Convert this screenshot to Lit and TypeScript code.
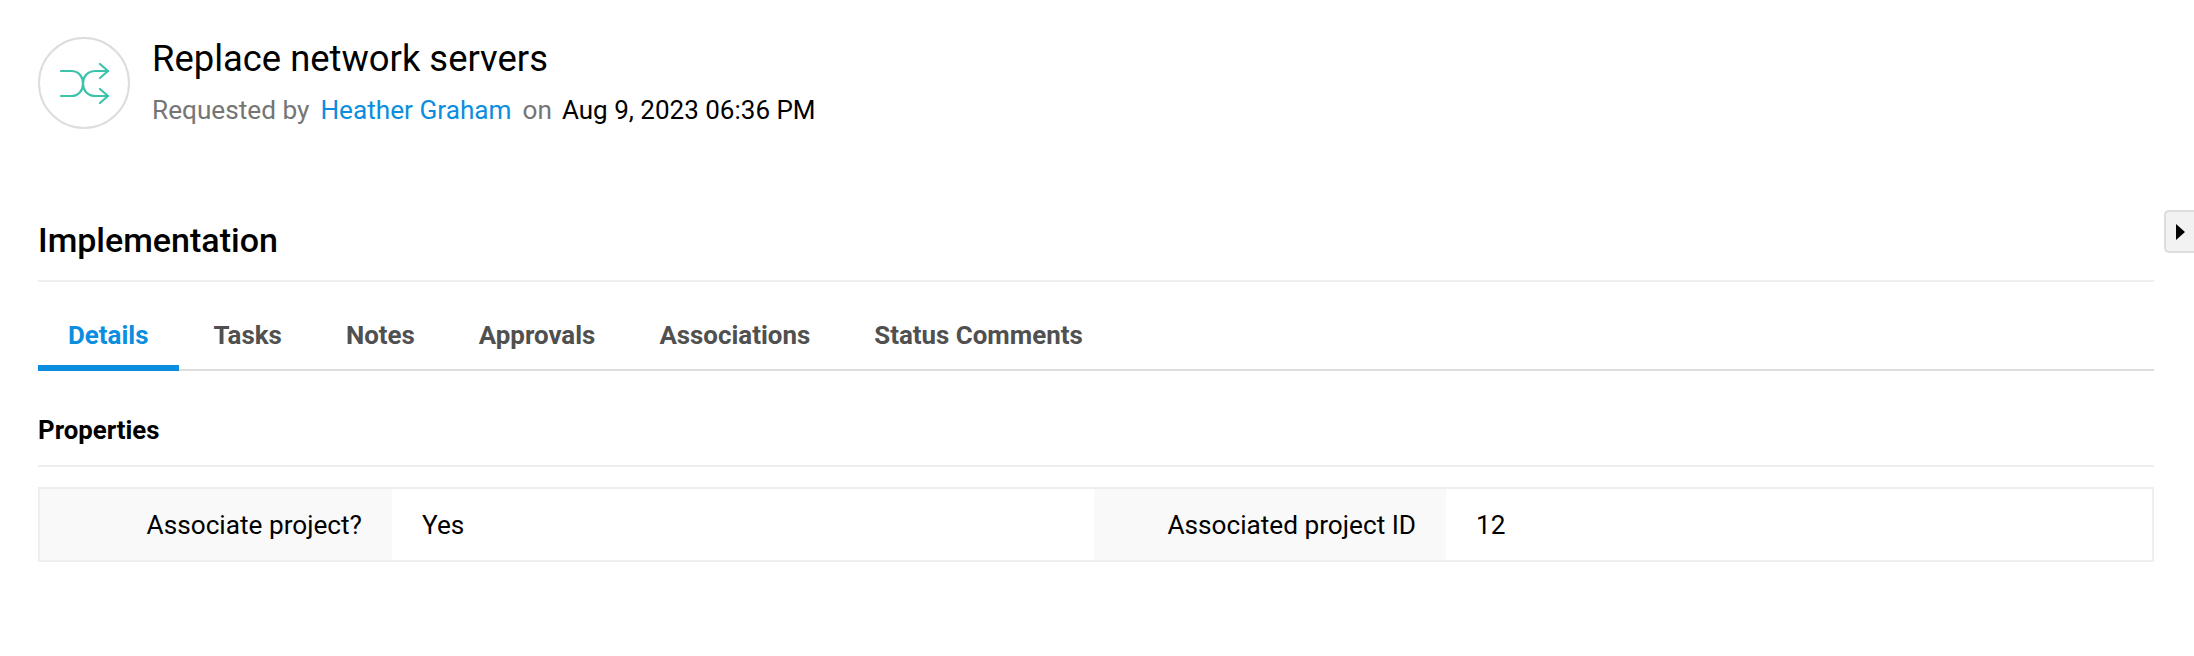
import { LitElement, html, css } from 'lit';
import { customElement } from 'lit/decorators.js';

const TABS = ['Details', 'Tasks', 'Notes', 'Approvals', 'Associations', 'Status Comments'];

@customElement('app-root')
export class AppRoot extends LitElement {
  static styles = css`
    :host {
      display: block;
      position: relative;
      height: 656px;
      padding: 37px 40px 0 38px;
      box-sizing: border-box;
      background: #fff;
      color: #000;
      font-family: Roboto, "Liberation Sans", sans-serif;
      font-size: 26.2px;
      overflow: hidden;
    }

    .header {
      display: flex;
      align-items: center;
      gap: 22px;
      height: 92px;
    }

    .avatar {
      width: 92px;
      height: 92px;
      flex: none;
      box-sizing: border-box;
      border: 2px solid #ddd;
      border-radius: 50%;
      display: flex;
      align-items: center;
      justify-content: center;
    }

    .title {
      font-size: 36.4px;
      line-height: 37px;
      font-weight: 400;
      margin: 0 0 16px;
    }

    .meta {
      display: flex;
      gap: 11px;
      line-height: 34px;
    }

    .date {
      font-size: 26px;
      margin-left: -1px;
    }

    .muted {
      color: #757575;
    }

    .link {
      color: #0b8ee0;
    }

    .section-title {
      font-size: 34px;
      font-weight: 500;
      line-height: 40px;
      margin: 91px 0 0;
      padding-bottom: 20px;
      border-bottom: 2px solid #eee;
    }

    .tabs {
      display: flex;
      margin-top: 20px;
      height: 69px;
      box-sizing: border-box;
      border-bottom: 2px solid #ddd;
      font-size: 25.9px;
    }

    .tab {
      padding: 0 30px;
      margin-right: 4px;
      height: 69px;
      box-sizing: border-box;
      line-height: 66px;
      font-weight: 700;
      color: #505050;
    }

    .tab.active {
      padding-right: 31px;
      color: #0b8ee0;
      border-bottom: 6px solid #0b8ee0;
    }

    .subhead {
      font-size: 25.8px;
      font-weight: 700;
      line-height: 30px;
      margin: 44px 0 0;
      padding-bottom: 20px;
      border-bottom: 2px solid #eee;
    }

    .grid {
      display: grid;
      grid-template-columns: 352px 702px 352px 1fr;
      margin-top: 20px;
      height: 75px;
      box-sizing: border-box;
      border: 2px solid #eee;
    }

    .label,
    .value {
      display: flex;
      align-items: center;
      line-height: 30px;
    }

    .label {
      justify-content: flex-end;
      padding-right: 30px;
      background: #f9f9f9;
    }

    .value {
      padding-left: 30px;
    }

    .toggle {
      position: absolute;
      top: 210px;
      right: 0;
      width: 30px;
      height: 43px;
      box-sizing: border-box;
      border: 2px solid #ddd;
      border-right: none;
      border-radius: 5px 0 0 5px;
      background: #f2f2f2;
      display: flex;
      align-items: center;
      justify-content: center;
    }
  `;

  render() {
    return html`
      <div class="header">
        <div class="avatar">
          <svg width="50" height="42" viewBox="0 0 50 42" fill="none" stroke="#3cc3ab" stroke-width="2.2" stroke-linecap="round" stroke-linejoin="round">
            <path d="M2 9H12C20 9 24 15 24 21.5C24 28 28 34 37 34H49" />
            <path d="M2 34H12C20 34 24 28 24 21.5C24 15 28 9 37 9H49" />
            <path d="M41 2L49 9L41 16" />
            <path d="M41 27L49 34L41 41" />
          </svg>
        </div>
        <div>
          <h1 class="title">Replace network servers</h1>
          <div class="meta">
            <span class="muted">Requested by</span>
            <span class="link">Heather Graham</span>
            <span class="muted">on</span>
            <span class="date">Aug 9, 2023 06:36 PM</span>
          </div>
        </div>
      </div>

      <h2 class="section-title">Implementation</h2>

      <div class="tabs">
        ${TABS.map((tab, i) => html`<div class="tab ${i === 0 ? 'active' : ''}">${tab}</div>`)}
      </div>

      <h3 class="subhead">Properties</h3>

      <div class="grid">
        <div class="label">Associate project?</div>
        <div class="value">Yes</div>
        <div class="label">Associated project ID</div>
        <div class="value">12</div>
      </div>

      <div class="toggle">
        <svg width="9" height="16" viewBox="0 0 9 16"><path d="M0 0L9 8L0 16Z" fill="#000" /></svg>
      </div>
    `;
  }
}
